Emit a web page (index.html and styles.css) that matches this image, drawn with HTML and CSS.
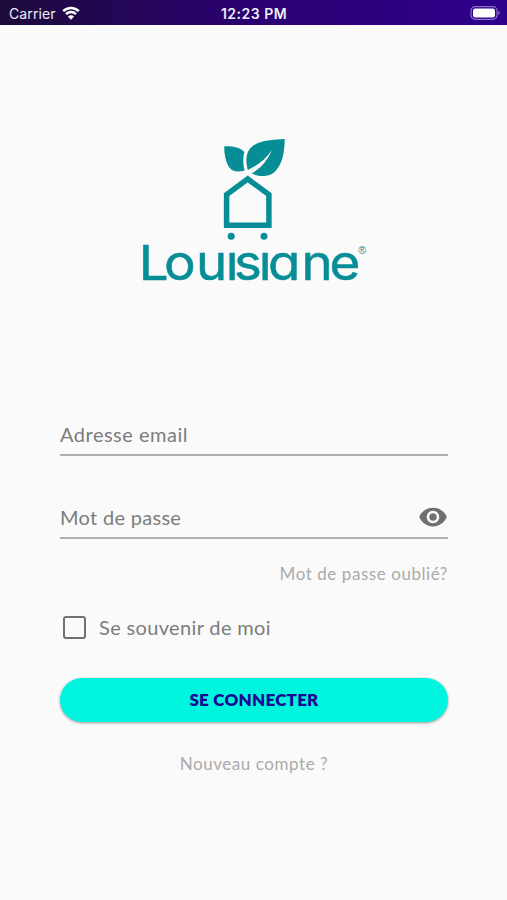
FILE: index.html
```html
<!DOCTYPE html>
<html lang="fr">

<head>
    <meta charset="utf-8">
    <title>Louisiane - Connexion</title>
    <link rel="stylesheet" href="styles.css">
</head>

<body>
    <header class="status-bar">
        <div class="status-left">
            <span class="carrier">Carrier</span>
            <svg class="wifi" viewBox="0 0 18 14">
                <path d="M1.2 5.2a11 11 0 0 1 15.6 0M4 8.2a7 7 0 0 1 10 0" />
                <path class="wifi-dot" d="M9 13.8L5.9 10.6a4.4 4.4 0 0 1 6.2 0z" />
            </svg>
        </div>
        <div class="time">12:23 PM</div>
        <svg class="battery" viewBox="0 0 31 14">
            <rect class="battery-case" x="1" y=".7" width="26" height="12.6" rx="4" />
            <rect class="battery-level" x="3" y="2.6" width="22" height="8.8" rx="2.2" />
            <path class="battery-tip" d="M28.4 4.8q3 2.2 0 4.4z" />
        </svg>
    </header>

    <main class="login">
        <svg class="logo" viewBox="-10 0 250 165" role="img" aria-label="Louisiane">
            <!-- leaves -->
            <path d="M84.200 11.300C93 11 100 12.500 104.300 17C102.800 23 103 29.500 104.600 35.500C97.500 37.500 91.500 36.500 88.300 31C85.500 26 84.200 19 84.200 11.300z" />
            <path d="M144.700 4C131 4.500 117 6 110.500 13C105 19.500 106 28 107.800 35C117 31 125.500 24.500 131.800 15.300C128 24.500 121.500 33 111.500 38.500C118 41.300 127.500 42.500 133.500 38C142 31 144.700 18 144.700 4z" />
            <!-- house on wheels -->
            <path class="house" d="M107.700 44L86.600 59.600V90.300H128.900V59.600z" />
            <circle cx="91.200" cy="101.300" r="3.500" />
            <circle cx="124" cy="101.300" r="3.500" />
            <text class="wordmark" transform="scale(1.09 1)" y="145.300" x="-1.200 22 51.400 78.700 86.300 109 117.400 148.200 173.900">Louısıane</text>
            <text class="registered" x="218.300" y="118.500">®</text>
        </svg>

        <form class="form">
            <div class="field">
                <span class="label email">Adresse email</span>
            </div>
            <div class="field">
                <span class="label password">Mot de passe</span>
                <svg class="eye" viewBox="0 0 24 24">
                    <path d="M12 4.500C7 4.500 2.730 7.610 1 12c1.730 4.390 6 7.500 11 7.500s9.270-3.110 11-7.500c-1.730-4.390-6-7.500-11-7.500zM12 17c-2.760 0-5-2.240-5-5s2.240-5 5-5 5 2.240 5 5-2.240 5-5 5zm0-8c-1.660 0-3 1.340-3 3s1.340 3 3 3 3-1.340 3-3-1.340-3-3-3z" />
                </svg>
            </div>
            <a class="link forgot">Mot de passe oublié?</a>
            <label class="remember">
                <span class="checkbox"></span>
                <span class="label souvenir">Se souvenir de moi</span>
            </label>
            <button class="submit" type="button"><span>SE CONNECTER</span></button>
            <a class="link signup">Nouveau compte ?</a>
        </form>
    </main>
</body>

</html>
```

FILE: styles.css
```css
* {
    box-sizing: border-box;
}

body {
    margin: 0;
    height: 900px;
    background-color: #fafafa;
    font-family: Lato, "Open Sans", sans-serif;
    overflow: hidden;
}

.status-bar {
    display: grid;
    grid-template-columns: 1fr auto 1fr;
    align-items: center;
    height: 25px;
    padding: 2px 6px 0 9px;
    background: linear-gradient(to right, #1d0b3c, #2a0071 50%, #2d018c);
    color: #f0ecf7;
    font-family: Inter, sans-serif;
    font-size: 14px;
}

.status-left {
    display: flex;
    align-items: center;
    gap: 6px;
}

.carrier {
    letter-spacing: 0.1px;
}

.wifi {
    width: 18px;
    height: 14px;
    margin-bottom: 2px;
    fill: none;
    stroke: #fff;
    stroke-width: 2.5;
}

.wifi-dot {
    fill: #fff;
    stroke: none;
}

.time {
    font-weight: 600;
    letter-spacing: 0.5px;
    margin-right: 2px;
}

.battery {
    width: 31px;
    height: 14px;
    margin-bottom: 2px;
    justify-self: end;
}

.battery-case {
    fill: none;
    stroke: #8d72c4;
    stroke-width: 1.2;
}

.battery-level {
    fill: #fff;
}

.battery-tip {
    fill: #8d72c4;
}

.login {
    padding: 110px 59px 0 60px;
}

.logo {
    display: block;
    width: 250px;
    height: 165px;
    margin-left: 70px;
    fill: #078d96;
}

.house {
    fill: none;
    stroke: #078d96;
    stroke-width: 5.5;
}

.wordmark {
    font-family: Inter, sans-serif;
    font-size: 48.5px;
    font-weight: 400;
    /* single-storey a */
    font-feature-settings: "cv11";
    stroke: #078d96;
    stroke-width: 0.5;
}

.registered {
    font-family: "Liberation Sans", sans-serif;
    font-size: 10.5px;
}

.form {
    display: flex;
    flex-direction: column;
    margin-top: 106px;
}

.field {
    display: flex;
    align-items: center;
    justify-content: space-between;
    height: 50px;
    padding-top: 8px;
    border-bottom: 2px solid #b0b0b0;
}

.field + .field {
    margin-top: 33px;
}

.label {
    color: #7c7c7c;
    font-size: 20px;
    white-space: nowrap;
}

.email {
    letter-spacing: 0.5px;
}

.password {
    letter-spacing: 0.3px;
}

.souvenir {
    margin-bottom: 1px;
    letter-spacing: 0.35px;
}

.eye {
    width: 30px;
    height: 30px;
    fill: #707070;
}

.link {
    color: #aaa;
    font-size: 17px;
    line-height: 22px;
    letter-spacing: 0.56px;
    white-space: nowrap;
}

.forgot {
    align-self: flex-end;
    margin-top: 24px;
}

.remember {
    display: flex;
    align-items: center;
    gap: 13px;
    height: 30px;
    margin: 27px 0 0 3px;
}

.checkbox {
    width: 23px;
    height: 23px;
    border: 2px solid #717171;
    border-radius: 3px;
}

.submit {
    height: 44px;
    margin-top: 36px;
    padding: 0 0 2px;
    border: 0;
    border-radius: 22px;
    background-color: #00f5df;
    box-shadow: 0 1px 3px rgba(0, 0, 0, 0.4);
    color: #1b0b91;
    font-family: inherit;
    font-size: 17px;
    font-weight: 800;
    letter-spacing: 0.25px;
}

.signup {
    align-self: center;
    margin-top: 31px;
}
```
